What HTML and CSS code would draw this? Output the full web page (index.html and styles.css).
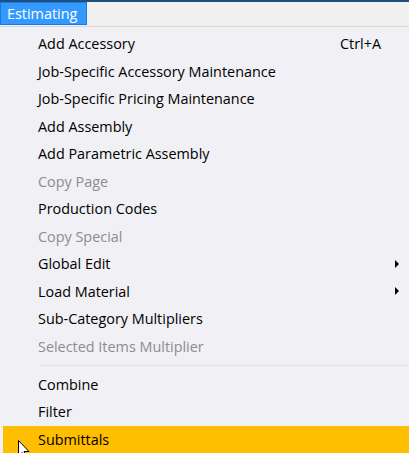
FILE: index.html
```html
<!DOCTYPE html>
<html>
<head>
<meta charset="utf-8">
<link rel="stylesheet" href="styles.css">
</head>
<body>
<div class="window">
  <div class="menubar">
    <span class="menubar-item active">Estimating</span>
  </div>
  <div class="dropdown">
    <div class="item"><span class="label">Add Accessory</span><span class="shortcut">Ctrl+A</span></div>
    <div class="item"><span class="label">Job-Specific Accessory Maintenance</span></div>
    <div class="item"><span class="label">Job-Specific Pricing Maintenance</span></div>
    <div class="item"><span class="label">Add Assembly</span></div>
    <div class="item"><span class="label">Add Parametric Assembly</span></div>
    <div class="item disabled"><span class="label">Copy Page</span></div>
    <div class="item"><span class="label">Production Codes</span></div>
    <div class="item disabled"><span class="label">Copy Special</span></div>
    <div class="item"><span class="label">Global Edit</span><span class="submenu-arrow"></span></div>
    <div class="item"><span class="label">Load Material</span><span class="submenu-arrow"></span></div>
    <div class="item"><span class="label">Sub-Category Multipliers</span></div>
    <div class="item disabled"><span class="label">Selected Items Multiplier</span></div>
    <div class="separator"></div>
    <div class="item"><span class="label">Combine</span></div>
    <div class="item"><span class="label">Filter</span></div>
    <div class="item hover"><span class="label">Submittals</span>
      <svg class="cursor" width="12" height="19" viewBox="0 0 12 19">
        <path d="M0.5 0.5 L0.5 16 L4 12.5 L6.5 18 L8.5 17 L6 11.5 L11 11.5 Z" fill="#fff" stroke="#000" stroke-width="1"/>
      </svg>
    </div>
  </div>
</div>
</body>
</html>
```
FILE: styles.css
```css
html, body {
  margin: 0;
  padding: 0;
  background: #f0f0f5;
  overflow: hidden;
}

.window {
  width: 409px;
  height: 453px;
  font-family: "Open Sans", "Noto Sans", sans-serif;
  font-size: 14.4px;
  color: #000;
  border-top: 2px solid #1e4f7e;
  box-sizing: border-box;
}

.menubar {
  height: 24px;
  background: #f0f0f0;
  border-bottom: 1px solid #d8d8dc;
  display: flex;
}

.menubar-item {
  display: flex;
  align-items: center;
  height: 23px;
  width: 87px;
  box-sizing: border-box;
  color: #fff;
}

.menubar-item.active {
  background: #3399ff;
  border: 1px solid #1a7ae0;
  padding-left: 6px;
}

.dropdown {
  padding-top: 3px;
  background: #f0f0f5;
}

.item {
  position: relative;
  height: 27.5px;
  display: flex;
  align-items: center;
  padding-left: 38px;
  padding-right: 28px;
}

.item .label {
  flex: 1;
  white-space: nowrap;
}

.item .shortcut {
  text-align: right;
}

.item.disabled {
  color: #8d8d8d;
}

.item.hover {
  background: #ffbf00;
  margin-left: 3px;
  padding-left: 35px;
}

.submenu-arrow {
  width: 0;
  height: 0;
  border-top: 4px solid transparent;
  border-bottom: 4px solid transparent;
  border-left: 4px solid #000;
  margin-right: -18px;
}

.separator {
  height: 1px;
  background: #e2e2e6;
  margin: 5px 0 4.5px 40px;
}

.cursor {
  position: absolute;
  left: 15px;
  top: 14px;
}
```
